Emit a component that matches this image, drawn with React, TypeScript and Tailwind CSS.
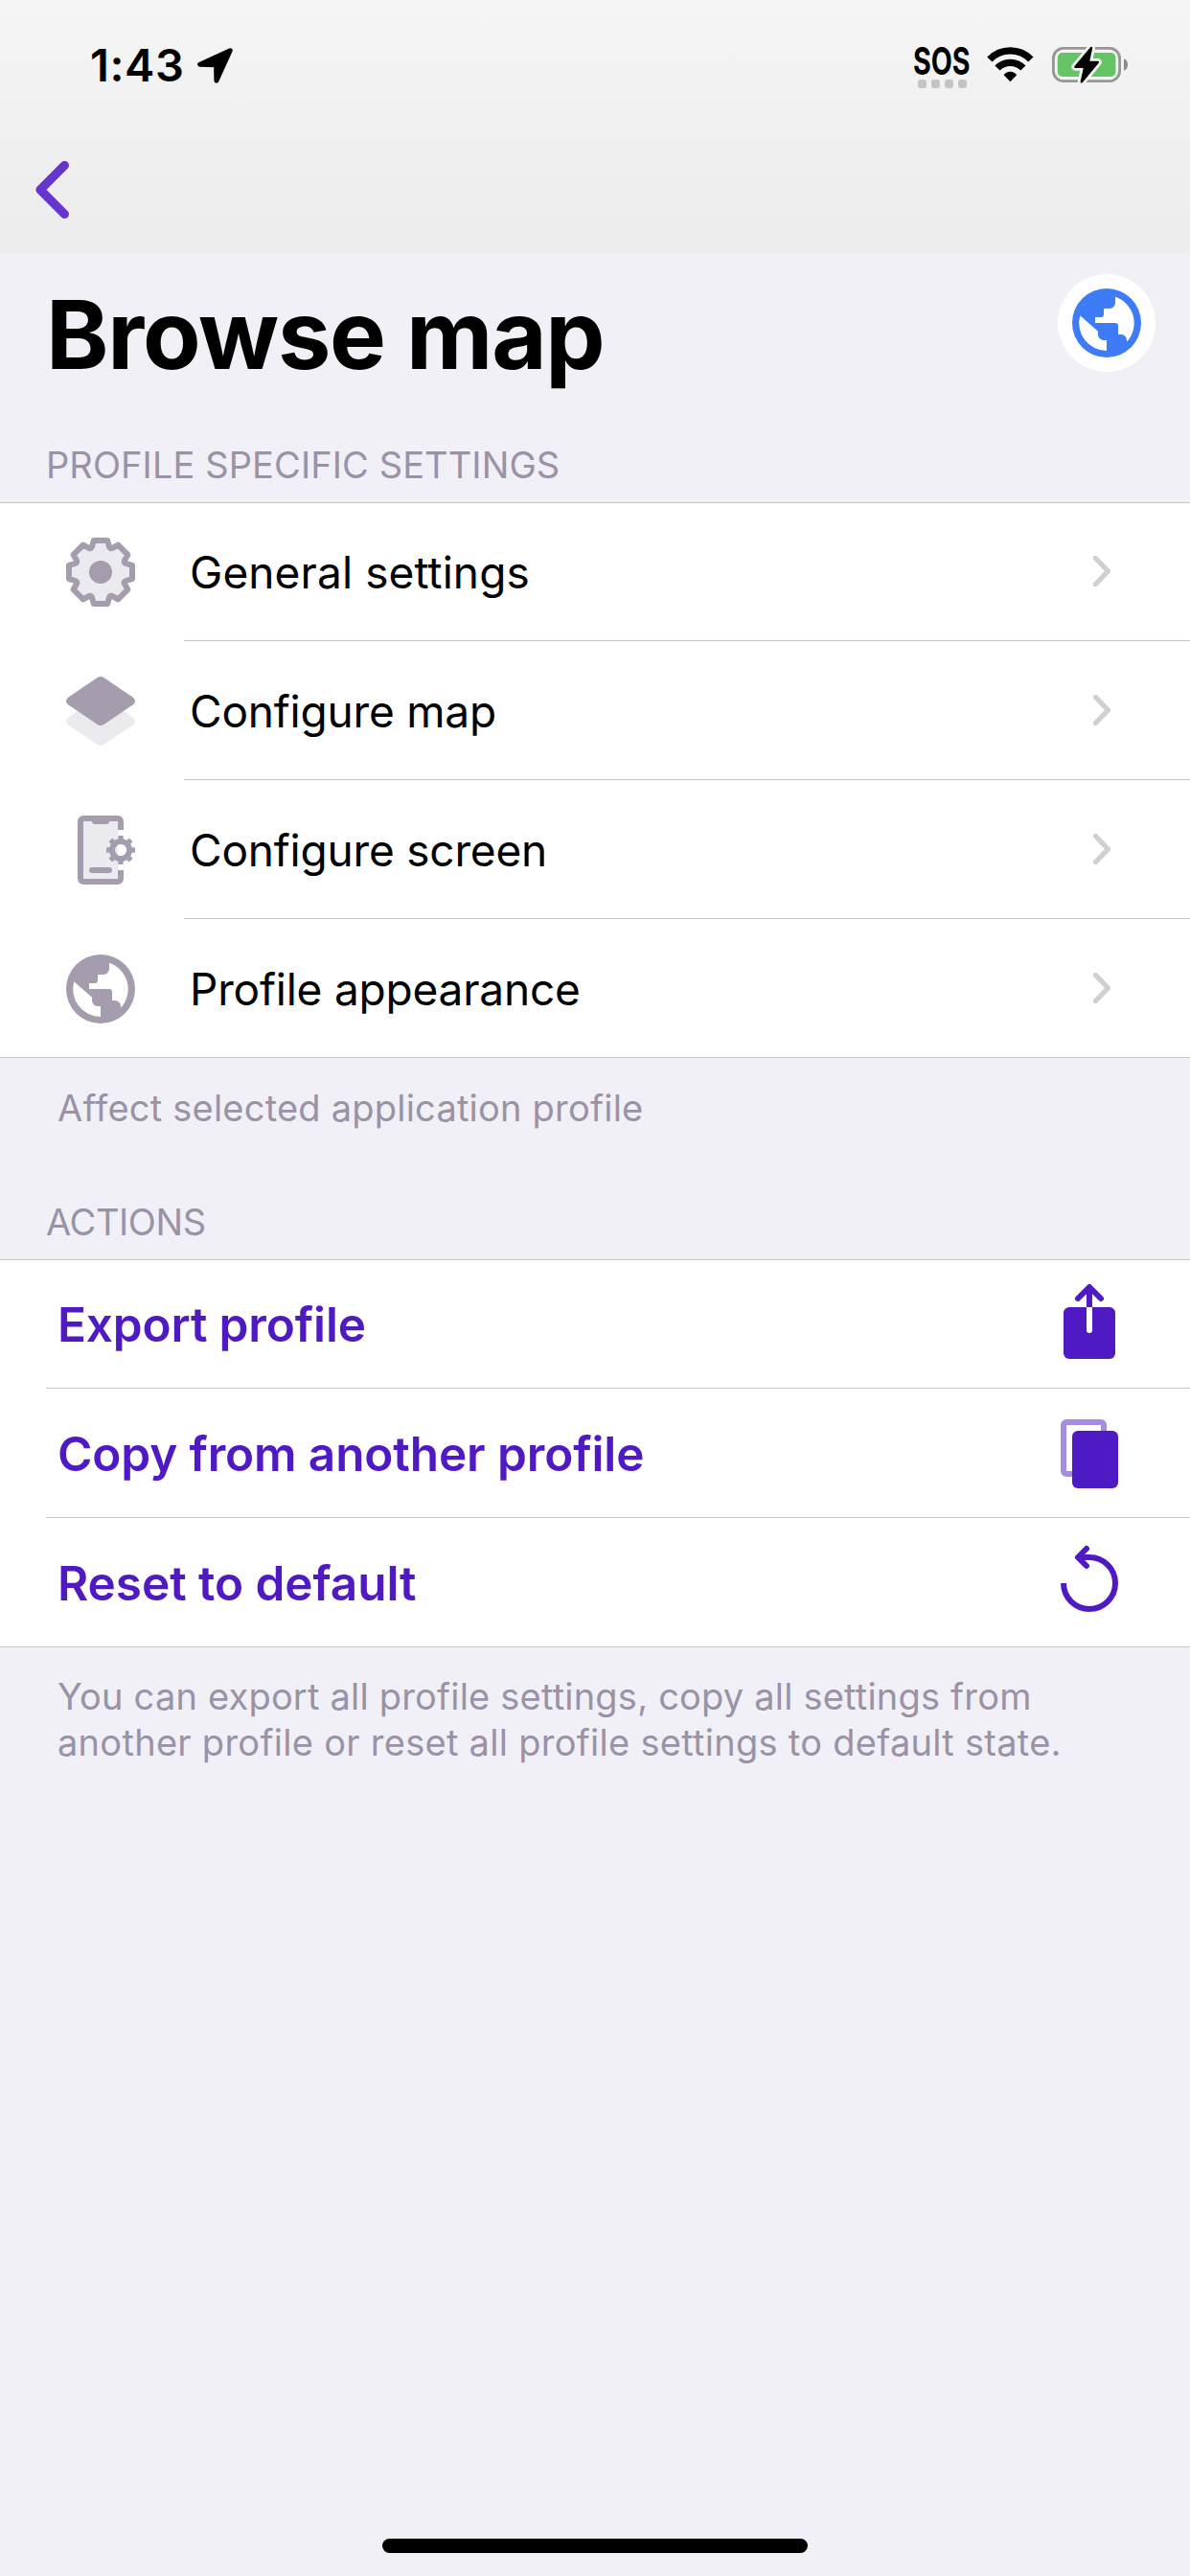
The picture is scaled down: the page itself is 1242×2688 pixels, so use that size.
import type { ReactNode } from 'react';

const round = (n: number) => Math.round(n * 100) / 100;

/* Eight-toothed gear outline centred on (15, 15). */
function gearPath() {
  let d = '';
  for (let k = 0; k < 8; k++) {
    const a = (k * Math.PI) / 4;
    const p = (x: number, y: number, extra = 0) => {
      const t = a + extra;
      return `${round(15 + x * Math.cos(t) - y * Math.sin(t))} ${round(15 + x * Math.sin(t) + y * Math.cos(t))}`;
    };
    d += `${k === 0 ? 'M' : 'L'}${p(-2.4, -11)}L${p(2.4, -11)}L${p(2.95, -9)}Q${p(3.25, -7.8)} ${p(-2.95, -9, Math.PI / 4)}`;
  }
  return d + 'Z';
}

const GEAR = gearPath();
const ANGLES = [0, 45, 90, 135, 180, 225, 270, 315];

function Icon({ children, className = '' }: { children: ReactNode; className?: string }) {
  return (
    <svg viewBox="0 0 30 30" className={`size-[90px] shrink-0 ${className}`} fill="none">
      {children}
    </svg>
  );
}

function GearIcon() {
  return (
    <Icon>
      <path d={GEAR} fill="#ebeaef" stroke="#a59dae" strokeWidth="2" strokeLinejoin="round" />
      <circle cx="15" cy="15" r="4" fill="#a59dae" />
    </Icon>
  );
}

const DIAMOND =
  'M13.9 3.35Q15 2.65 16.1 3.35L26.3 10.25Q27.7 11.5 26.3 12.75L16.1 19.65Q15 20.35 13.9 19.65L3.7 12.75Q2.3 11.5 3.7 10.25Z';

function LayersIcon() {
  return (
    <Icon>
      <path d={DIAMOND} fill="#ebeaef" transform="translate(0 7)" />
      <path d={DIAMOND} fill="#a59dae" />
    </Icon>
  );
}

function ScreenIcon() {
  return (
    <Icon>
      <path d="M9 5H21V25H9Z" fill="#ebeaef" />
      <path
        d="M9 3H21A2 2 0 0 1 23 5V8H21V5H18.1Q17.9 6 17 6H13Q12.1 6 11.9 5H9V25H21V22H23V25A2 2 0 0 1 21 27H9A2 2 0 0 1 7 25V5A2 2 0 0 1 9 3Z"
        fill="#a59dae"
      />
      <rect x="11" y="21" width="8" height="2" rx="1" fill="#a59dae" />
      <circle cx="22" cy="15" r="3" stroke="#a59dae" strokeWidth="2" />
      <path d="M22 13A2 2 0 0 1 22 17A2 2 0 0 1 21 16.73V13.27A2 2 0 0 1 22 13Z" fill="#fff" />
      {ANGLES.map((a) => (
        <rect key={a} x="21.1" y="10" width="1.8" height="1.6" fill="#a59dae" transform={`rotate(${a} 22 15)`} />
      ))}
    </Icon>
  );
}

function GlobeIcon({ color, className = '' }: { color: string; className?: string }) {
  return (
    <Icon className={className}>
      <circle cx="15" cy="15" r="12" fill={color} />
      <path
        d="M18 5.9V8A2 2 0 0 1 16 10H14V12A1 1 0 0 1 13 13H11V15H18A1 1 0 0 1 19 16V19H20A2 2 0 0 1 22 21V21.6A9.67 9.67 0 0 0 18 5.9Z"
        fill="#fff"
      />
      <path d="M5.75 12.4L12 17.9V19A2 2 0 0 0 14 21H15V24.65A9.65 9.65 0 0 1 5.75 12.4Z" fill="#fff" />
    </Icon>
  );
}

function ExportIcon() {
  return (
    <Icon>
      <rect x="6" y="9" width="18" height="18" rx="2" fill="#4f19c4" />
      <path d="M11 6L15 2L19 6" stroke="#4f19c4" strokeWidth="2" strokeLinecap="round" strokeLinejoin="round" />
      <path d="M15 2V9" stroke="#4f19c4" strokeWidth="2" />
      <path d="M14 9H16V17A1 1 0 0 1 14 17Z" fill="#fff" />
    </Icon>
  );
}

function CopyIcon() {
  return (
    <Icon>
      <rect x="6" y="4" width="14" height="18" rx="1" stroke="#a78ce1" strokeWidth="2" />
      <rect x="9" y="7" width="16" height="20" rx="2" fill="#4f19c4" />
    </Icon>
  );
}

function ResetIcon() {
  return (
    <Icon>
      <path d="M6 15A9 9 0 1 0 15 6H11.5" stroke="#4f19c4" strokeWidth="2" />
      <path d="M14 3L11 6L14 9" stroke="#4f19c4" strokeWidth="2" strokeLinecap="round" strokeLinejoin="round" />
    </Icon>
  );
}

function StatusBar() {
  return (
    <div className="flex h-[136px] items-start justify-between pr-[64px] pl-[94px]">
      <div className="flex items-start pt-[40px]">
        <span className="w-[112px] text-[47px] leading-[56px] font-semibold tracking-[0.6px]">1:43</span>
        <svg viewBox="206 50 37 37" className="mt-[10px] size-[37px]">
          <path
            d="M240.2 52.8L208.7 67.2L225.6 67.7L225.9 84.2Z"
            fill="#000"
            stroke="#000"
            strokeWidth="5"
            strokeLinejoin="round"
          />
        </svg>
      </div>
      <div className="flex items-start pt-[48px]">
        <div className="w-[60px]">
          <span className="block h-[35px] w-[90px] origin-left scale-x-[0.735] text-[39px] leading-[32px] font-bold">SOS</span>
          <div className="flex gap-[5px] pl-[5px]">
            {[0, 1, 2, 3].map((i) => (
              <span key={i} className="size-[9px] rounded-[3px] bg-[#c4c4c4]" />
            ))}
          </div>
        </div>
        <svg viewBox="0 0 49 37" className="mt-px ml-[17px] h-[37px] w-[49px]" fill="none">
          <path d="M2.9 13A30 30 0 0 1 45.9 13" stroke="#000" strokeWidth="7.4" />
          <path d="M11 22.1A18.5 18.5 0 0 1 37.8 22.1" stroke="#000" strokeWidth="7.2" />
          <path d="M17.6 29.2A8.5 8.5 0 0 1 31.2 29.2L24.4 36.2Z" fill="#000" />
        </svg>
        <svg viewBox="1099 46 80 43" className="-mt-[2px] ml-[19px] h-[43px] w-[80px]">
          <rect x="1100.4" y="50.4" width="69.2" height="34.2" rx="10.5" fill="none" stroke="#969696" strokeWidth="2.8" />
          <rect x="1104.8" y="55" width="60.6" height="25" rx="5" fill="#65c466" />
          <path d="M1174 61.2Q1178 63 1178 67.4T1174 73.8Z" fill="#8a8a8a" />
          <path
            d="M1140 50L1123.4 69.8H1133.2L1129.8 85.4L1146.8 65H1136.8Z"
            fill="#000"
            stroke="#f3f3f3"
            strokeWidth="8"
            strokeLinejoin="round"
          />
          <path
            d="M1140 50L1123.4 69.8H1133.2L1129.8 85.4L1146.8 65H1136.8Z"
            fill="#000"
            stroke="#000"
            strokeWidth="2.4"
            strokeLinejoin="round"
          />
        </svg>
      </div>
    </div>
  );
}

function SectionLabel({ children, className }: { children: ReactNode; className: string }) {
  return <h2 className={`pb-4 pl-[48px] text-[38px] leading-[46px] text-[#9a92a6] ${className}`}>{children}</h2>;
}

function SettingRow({ icon, label, tracking, last }: { icon: ReactNode; label: string; tracking: string; last?: boolean }) {
  return (
    <li className="flex h-[145px] flex-col">
      <div className="flex flex-1 items-center pt-0.5 pr-[83px] pl-[60px]">
        {icon}
        <span className={`ml-[48px] flex-1 text-[46px] leading-[56px] ${tracking}`}>{label}</span>
        <svg viewBox="0 0 18 32" className="mb-[2px] h-[32px] w-[18px]" fill="none">
          <path d="M2.5 2.5L15.5 16L2.5 29.5" stroke="#d0d0d2" strokeWidth="5.4" strokeLinecap="round" strokeLinejoin="round" />
        </svg>
      </div>
      <div className={`h-px bg-[#c6c6c8] ${last ? '' : 'ml-[192px]'}`} />
    </li>
  );
}

function ActionRow({ icon, label, tracking, last }: { icon: ReactNode; label: string; tracking: string; last?: boolean }) {
  return (
    <li className="flex h-[135px] flex-col">
      <div className="flex flex-1 items-center pt-0.5 pr-[60px] pl-[60px]">
        <span className={`flex-1 text-[49.5px] leading-[60px] font-semibold text-[#4f19c4] ${tracking}`}>{label}</span>
        {icon}
      </div>
      <div className={`h-px bg-[#c6c6c8] ${last ? '' : 'ml-[48px]'}`} />
    </li>
  );
}

export default function App() {
  return (
    <div className="flex h-[2688px] w-[1242px] flex-col overflow-hidden bg-[#f1f0f6] font-['Inter',sans-serif] text-black">
      <header className="h-[264px] bg-linear-to-b from-[#f5f5f5] to-[#ececed]">
        <StatusBar />
        <button className="ml-[36px] block pt-[31px]" aria-label="Back">
          <svg viewBox="36 167 37 62" className="h-[62px] w-[37px]" fill="none">
            <path d="M67.4 172.6L42 198L67.4 223.4" stroke="#6535ce" strokeWidth="9.2" strokeLinecap="round" strokeLinejoin="round" />
          </svg>
        </button>
      </header>

      <div className="flex h-[198px] items-start justify-between pt-[22px] pr-[36px] pl-[48px]">
        <h1 className="pt-[3px] text-[99px] leading-[120px] font-bold tracking-[-1.25px]">Browse map</h1>
        <div className="flex size-[102px] items-center justify-center rounded-full bg-white">
          <GlobeIcon color="#3e7cf7" />
        </div>
      </div>

      <SectionLabel className="tracking-[0.1px]">PROFILE SPECIFIC SETTINGS</SectionLabel>
      <ul className="bg-white shadow-[inset_0_1px_0_#c6c6c8]">
        <SettingRow icon={<GearIcon />} label="General settings" tracking="tracking-[0.1px]" />
        <SettingRow icon={<LayersIcon />} label="Configure map" tracking="tracking-[-0.2px]" />
        <SettingRow icon={<ScreenIcon />} label="Configure screen" tracking="tracking-[-0.2px]" />
        <SettingRow icon={<GlobeIcon color="#a59dae" />} label="Profile appearance" tracking="tracking-[-0.2px]" last />
      </ul>
      <p className="pt-[28px] pl-[60px] text-[38px] leading-[48px] tracking-[0.22px] text-[#9a92a6]">
        Affect selected application profile
      </p>

      <SectionLabel className="pt-[72px] tracking-[-0.4px]">ACTIONS</SectionLabel>
      <ul className="bg-white shadow-[inset_0_1px_0_#c6c6c8]">
        <ActionRow icon={<ExportIcon />} label="Export profile" tracking="tracking-[-0.15px]" />
        <ActionRow icon={<CopyIcon />} label="Copy from another profile" tracking="tracking-[-0.13px]" />
        <ActionRow icon={<ResetIcon />} label="Reset to default" tracking="tracking-[-0.05px]" last />
      </ul>
      <p className="pt-[27px] pl-[60px] text-[38px] leading-[48px] tracking-[0.2px] whitespace-nowrap text-[#9a92a6]">
        You can export all profile settings, copy all settings from
        <br />
        <span className="tracking-[0.28px]">another profile or reset all profile settings to default state.</span>
      </p>

      <div className="mt-auto mb-[24px] h-[15px] w-[444px] self-center rounded-full bg-black" />
    </div>
  );
}
